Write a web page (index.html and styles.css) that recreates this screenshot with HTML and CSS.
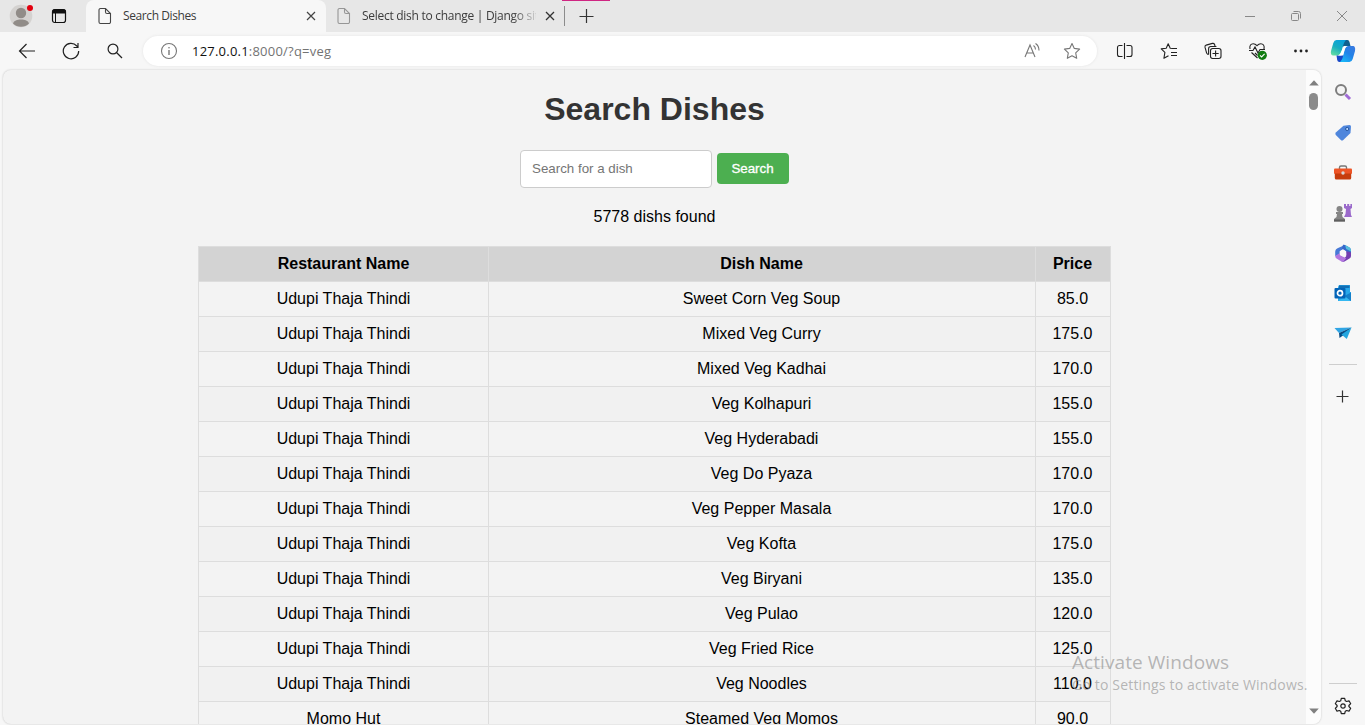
FILE: index.html
```html
<!DOCTYPE html>
<html lang="en">
<head>
<meta charset="utf-8">
<title>Search Dishes</title>
<link rel="stylesheet" href="styles.css">
</head>
<body>
<header class="tabstrip">
  <div class="profile">
    <svg width="24" height="24" viewBox="0 0 24 24"><circle cx="12" cy="12" r="11.3" fill="#d4d2d0"/><circle cx="12" cy="9" r="5.2" fill="#918c88"/><path d="M4 19.500c1-3 4-4 8-4s7 1 8 4a11.300 11.300 0 0 1-16 0z" fill="#918c88"/></svg>
    <span class="alert-dot"></span>
  </div>
  <div class="workspace"><svg width="16" height="16" viewBox="0 0 16 16" fill="none" stroke="#111"><rect x="1.500" y="1.500" width="13" height="13" rx="2.200" stroke-width="1.200"/><path d="M2 2h12v3H2z" fill="#111"/><path d="M4.500 5v9.500"/></svg></div>
  <div class="tab tab-active">
    <svg class="file" width="14" height="18" viewBox="0 0 14 18" fill="none" stroke="#444" stroke-width="1.100"><path d="M2.500 1.500h5l5 5v8.500a1.500 1.500 0 0 1-1.500 1.500H2.500A1.500 1.500 0 0 1 1 15V3a1.500 1.500 0 0 1 1.500-1.500zM7.500 1.500V5a1.500 1.500 0 0 0 1.500 1.500h3.500"/></svg>
    <span class="tab-title title-one">Search Dishes</span>
    <svg class="close" width="10" height="10" viewBox="0 0 10 10" stroke="#444" stroke-width="1.200"><path d="M1 1l8 8M9 1L1 9"/></svg>
  </div>
  <div class="tab tab-idle">
    <svg class="file" width="14" height="18" viewBox="0 0 14 18" fill="none" stroke="#969696" stroke-width="1.100"><path d="M2.500 1.500h5l5 5v8.500a1.500 1.500 0 0 1-1.500 1.500H2.500A1.500 1.500 0 0 1 1 15V3a1.500 1.500 0 0 1 1.500-1.500zM7.500 1.500V5a1.500 1.500 0 0 0 1.500 1.500h3.500"/></svg>
    <span class="tab-title title-two">Select dish to change | Django site</span>
    <svg class="close" width="10" height="10" viewBox="0 0 10 10" stroke="#333" stroke-width="1.300"><path d="M1 1l8 8M9 1L1 9"/></svg>
  </div>
  <div class="new-tab"><svg width="16" height="16" viewBox="0 0 16 16" stroke="#333" stroke-width="1.200"><path d="M8.500 1v14M1.500 8.500h14"/></svg></div>
  <div class="window-controls">
    <span><svg width="12" height="12" viewBox="0 0 12 12" stroke="#888"><path d="M1 6.500h10"/></svg></span>
    <span><svg width="12" height="12" viewBox="0 0 12 12" fill="none" stroke="#888"><rect x="1.500" y="3.500" width="7" height="7" rx="1"/><path d="M3.500 1.500h5a2 2 0 0 1 2 2v5"/></svg></span>
    <span><svg width="12" height="12" viewBox="0 0 12 12" stroke="#888"><path d="M1 1l10 10M11 1L1 11"/></svg></span>
  </div>
</header>

<nav class="toolbar">
  <span class="tool"><svg width="18" height="18" viewBox="0 0 18 18" fill="none" stroke="#222" stroke-width="1.200"><path d="M17 9H1.500M8.500 2L1.500 9l7 7"/></svg></span>
  <span class="tool"><svg width="18" height="18" viewBox="0 0 18 18" fill="none" stroke="#222" stroke-width="1.200"><path d="M16.700 9A7.700 7.700 0 1 1 14.800 4L16 5.500M16 1v4.500h-4.500"/></svg></span>
  <span class="tool"><svg width="18" height="18" viewBox="0 0 18 18" fill="none" stroke="#222" stroke-width="1.200"><circle cx="7" cy="7" r="4.900"/><path d="M10.500 10.500L16 16"/></svg></span>
  <div class="address">
    <svg width="18" height="18" viewBox="0 0 18 18" fill="none" stroke="#777" stroke-width="1.100"><circle cx="9" cy="9" r="7.500"/><path d="M9 8v5" stroke-width="1.400"/><circle cx="9" cy="5.700" r=".8" fill="#777" stroke="none"/></svg>
    <span class="url"><b>127.0.0.1</b>:8000/?q=veg</span>
    <svg class="read" width="18" height="18" viewBox="0 0 18 18" fill="none" stroke="#777" stroke-width="1.100"><path d="M2 15L7 3l5 12M3.700 11h6.600M10.500 3.500q2 1.500 2 4M12.500 1.500q3.500 2.200 3.500 7"/></svg>
    <svg width="18" height="18" viewBox="0 0 18 18" fill="none" stroke="#777" stroke-width="1.100" stroke-linejoin="round"><path d="M9 1.500l2.300 4.900 5.300.7-3.900 3.700 1 5.500L9 13.700l-4.700 2.600 1-5.500-3.900-3.700 5.300-.7z"/></svg>
  </div>
  <span class="tool"><svg width="18" height="18" viewBox="0 0 18 18" fill="none" stroke="#222" stroke-width="1.100"><path d="M6.500 3.500H3.500a2 2 0 0 0-2 2v7a2 2 0 0 0 2 2h3M10.500 3.500h3.500a2 2 0 0 1 2 2v7a2 2 0 0 1-2 2h-3.500M8.500 1v16"/></svg></span>
  <span class="tool"><svg width="18" height="18" viewBox="0 0 18 18" fill="none" stroke="#222" stroke-width="1.100" stroke-linejoin="round"><path d="M12.500 6.500L10.200 6.200 8.200 1.700 6.200 6.200l-5 .7 3.700 3.500-1 5.900L8.500 13.800M11 6.500h6M11 10.500h6M11 13.500h6"/></svg></span>
  <span class="tool"><svg width="18" height="18" viewBox="0 0 18 18" fill="none" stroke="#222" stroke-width="1.100"><rect x="6.500" y="6.500" width="10.500" height="10" rx="2.200"/><path d="M11.600 8.500v6M8.500 11.500h6.200M4.600 12.600L3.700 12.200q-1-.5-1.200-1.500L1 5.200Q.7 3.600 2.200 3.100L8.400 1.400Q10 1.100 10.600 2.500L11 4.200M4.600 12.600V6.700q0-2.200 2.200-2.200h5.600"/></svg></span>
  <span class="tool"><svg width="19" height="18" viewBox="0 0 19 18" fill="none" stroke="#222" stroke-width="1.100"><path d="M2 7C1.200 3.500 3 1.700 5.200 1.700 7 1.700 8 2.600 9 3.700c1-1.100 2-2 3.800-2C15 1.700 16.800 3.500 16 7M1 8.500h4L7 5l3 6 2-3.500h5M3.500 10.500l6 5.500M7 11l2.500 2.500"/><circle cx="14.300" cy="13.300" r="4.600" fill="#107c10" stroke="none"/><path d="M12 13.400l1.600 1.500 3-3" stroke="#fff"/></svg></span>
  <span class="tool"><svg width="18" height="18" viewBox="0 0 18 18" fill="#222"><circle cx="3.500" cy="9" r="1.400"/><circle cx="9" cy="9" r="1.400"/><circle cx="14.500" cy="9" r="1.400"/></svg></span>
  <span class="copilot"><svg width="26" height="24" viewBox="0 0 26 24">
    <defs><linearGradient id="c1" x1="0.700" y1="0" x2="0.200" y2="1"><stop offset="0" stop-color="#08a0dc"/><stop offset=".5" stop-color="#18adc0"/><stop offset="1" stop-color="#62dda1"/></linearGradient><linearGradient id="c2" x1="1" y1="0" x2="0.200" y2="1"><stop offset="0" stop-color="#3d79df"/><stop offset=".5" stop-color="#2182e8"/><stop offset="1" stop-color="#18b9f8"/></linearGradient></defs>
    <path d="M12 1h5.500Q19 1 19.500 3L20.500 7H16l-5 1z" fill="#10608f"/>
    <path d="M6.500 1H16c-2.500 2-3.300 8-4.800 12.500Q10.300 16.500 8 16.500H3.500C1 16.500.5 14.500 1 12L3.300 4Q4.200 1 6.500 1z" fill="url(#c1)"/>
    <path d="M6.500 16.500H14l-2 6.500H9.500Q7.500 23 7.200 21z" fill="#1848c8"/>
    <path d="M18.500 7h4C25 7 25.500 9 25 12l-2.300 8q-1 3-3.200 3H10c3-2 3.300-8 5-13q1-3 3.500-3z" fill="url(#c2)"/>
    <path d="M14 7H17q-2 1-3.100 6-.7 3.500-3.200 3.500H8q2-.5 3-3.500z" fill="#fff"/></svg></span>
</nav>

<div class="workarea">
  <div class="viewport">
    <main class="page">
      <h1>Search Dishes</h1>
      <form class="search"><input type="text" placeholder="Search for a dish"><button type="button">Search</button></form>
      <p class="count">5778 dishs found</p>
      <table>
        <colgroup><col class="col-restaurant"><col class="col-dish"><col class="col-price"></colgroup>
        <thead><tr><th>Restaurant Name</th><th>Dish Name</th><th>Price</th></tr></thead>
        <tbody>
          <tr><td>Udupi Thaja Thindi</td><td>Sweet Corn Veg Soup</td><td>85.0</td></tr>
          <tr><td>Udupi Thaja Thindi</td><td>Mixed Veg Curry</td><td>175.0</td></tr>
          <tr><td>Udupi Thaja Thindi</td><td>Mixed Veg Kadhai</td><td>170.0</td></tr>
          <tr><td>Udupi Thaja Thindi</td><td>Veg Kolhapuri</td><td>155.0</td></tr>
          <tr><td>Udupi Thaja Thindi</td><td>Veg Hyderabadi</td><td>155.0</td></tr>
          <tr><td>Udupi Thaja Thindi</td><td>Veg Do Pyaza</td><td>170.0</td></tr>
          <tr><td>Udupi Thaja Thindi</td><td>Veg Pepper Masala</td><td>170.0</td></tr>
          <tr><td>Udupi Thaja Thindi</td><td>Veg Kofta</td><td>175.0</td></tr>
          <tr><td>Udupi Thaja Thindi</td><td>Veg Biryani</td><td>135.0</td></tr>
          <tr><td>Udupi Thaja Thindi</td><td>Veg Pulao</td><td>120.0</td></tr>
          <tr><td>Udupi Thaja Thindi</td><td>Veg Fried Rice</td><td>125.0</td></tr>
          <tr><td>Udupi Thaja Thindi</td><td>Veg Noodles</td><td>110.0</td></tr>
          <tr><td>Momo Hut</td><td>Steamed Veg Momos</td><td>90.0</td></tr>
        </tbody>
      </table>
    </main>
    <div class="scrollbar">
      <svg width="10" height="6" viewBox="0 0 10 6"><path d="M5 .2L9.800 5.500H.2z" fill="#808080"/></svg>
      <span class="thumb"></span>
      <svg class="down" width="10" height="6" viewBox="0 0 10 6"><path d="M5 5.800L9.800.5H.2z" fill="#808080"/></svg>
    </div>
  </div>
  <aside class="sidebar">
    <span class="app"><svg width="18" height="18" viewBox="0 0 18 18" fill="none"><path d="M11.500 11.500l4.500 4.500" stroke="#a06bd6" stroke-width="3"/><circle cx="7" cy="7" r="5" fill="#f4f4f4" stroke="#7d7d7d" stroke-width="2"/></svg></span>
    <span class="app"><svg width="18" height="18" viewBox="0 0 18 18"><path d="M9.500 1.800L15.500 1q1.500 0 1.500 1.500l-.5 6.500-7.200 7q-1.300 1-2.500 0l-5-5q-1-1.200 0-2.400z" fill="#4f86dc"/><circle cx="13.200" cy="5" r="1.600" fill="#b6d4ff" stroke="#24559f"/></svg></span>
    <span class="app"><svg width="18" height="18" viewBox="0 0 18 18"><path d="M5.500 5V3.500q0-1.500 1.500-1.500h4q1.500 0 1.500 1.500V5" fill="none" stroke="#777" stroke-width="1.400"/><rect x="0" y="4.500" width="18" height="5.500" rx="1" fill="#ee5426"/><path d="M.8 9.500h16.400V14q0 1.500-1.500 1.500H2.300Q.8 15.500.8 14z" fill="#c63c0d"/><circle cx="9" cy="9" r="1.700" fill="#d6d6d6"/></svg></span>
    <span class="app"><svg width="20" height="18" viewBox="0 0 20 18"><path d="M11 0h2v2h1.200V0h2v2h1.200V0H19v4l-1.500 1 .5 6 1 2h-8l1.500-3 .5-5-2-1z" fill="#9b6acb"/><g fill="#858585"><circle cx="6.500" cy="5" r="3"/><path d="M3 8h7v2H9l.5 3 2.500 2v2.500H1V15l2.500-2 .5-3H3z"/></g><path d="M1 15.500h11v2H1z" fill="#5f5f5f"/></svg></span>
    <span class="app"><svg width="18" height="18" viewBox="0 0 18 18"><path d="M11 1.100L4 4Q1.200 5 1.200 8v4L5.800 11V7.300L12.500 3z" fill="#4779d6"/><path d="M9 .8q1-.3 2 .3l4.500 2.500q1.500 1 1.500 3v5L12.200 9V7.300L8 4.800z" fill="#3768ca"/><path d="M11 1l4.500 2.600q1.500 1 1.500 3v1L12.200 5z" fill="#55c0dd"/><path d="M17 8.500V12q0 1.500-1.500 2.500l-5 3Q9 18 7.500 17.200l4.700-5V7.300z" fill="#743eb0"/><path d="M1.200 12l4.600-3v2l6.400 3.200-2.700 3.300q-1 .4-2 0l-5-3Q1.200 13.600 1.200 12z" fill="#b276df"/><path d="M9 5.600l3.200 1.800v3.500L9 12.600l-3.200-1.800V7.300z" fill="#f8f8f8"/></svg></span>
    <span class="app"><svg width="18" height="18" viewBox="0 0 18 18"><path d="M5 1h11v7h1v9H4V3z" fill="#28a8ea"/><path d="M5 1.500h10.500V4H5z" fill="#126fb5"/><path d="M4 17l13-8v6q0 2-2 2z" fill="#35b8f1"/><path d="M10.500 12l6.500 5V8.500z" fill="#1480ca"/><rect x=".5" y="4" width="11" height="10.500" rx="1" fill="#0364b8"/><circle cx="6" cy="9.200" r="2.500" fill="none" stroke="#fff" stroke-width="1.700"/></svg></span>
    <span class="app"><svg width="18" height="18" viewBox="0 0 18 18"><path d="M.5 4l17-.5L5 9z" fill="#30a5e4"/><path d="M17.500 3.500L5 9l.5 5 3.500-2.500z" fill="#074c83"/><path d="M17.500 3.500L12.800 15 7.500 10.500z" fill="#24a6df"/></svg></span>
    <span class="divider"></span>
    <span class="add"><svg width="14" height="14" viewBox="0 0 14 14" stroke="#333" stroke-width="1.200"><path d="M6.500 .5v12M.5 6.500h12"/></svg></span>
    <span class="divider divider-bottom"></span>
    <span class="settings"><svg width="18" height="18" viewBox="0 0 18 18" fill="none" stroke="#222" stroke-width="1.200" stroke-linejoin="round"><path d="M7.300 1.300h3.400l.6 2.500 1.300.7 2.400-.7 1.700 2.900L14.900 8.500v1l1.800 1.800-1.700 2.900-2.400-.7-1.300.7-.6 2.500H7.300l-.6-2.500-1.300-.7-2.400.7-1.700-2.900 1.800-1.800v-1L1.300 6.700 3 3.800l2.400.7 1.300-.7z"/><circle cx="9" cy="9" r="2.200"/></svg></span>
  </aside>
</div>
<div class="watermark"><div class="watermark-title">Activate Windows</div><div class="watermark-text">Go to Settings to activate Windows.</div></div>
</body>
</html>
```
FILE: styles.css
```css
* { box-sizing: border-box; }
body { margin: 0; width: 1365px; height: 725px; overflow: hidden; display: flex; flex-direction: column; background: #f7f7f7; font-family: "Open Sans", sans-serif; }
svg { display: block; flex: none; }
.tabstrip { height: 32px; flex: none; display: flex; background: #e7e7e7; }
.profile { position: relative; width: 42px; padding: 4px 0 0 9px; }
.alert-dot { position: absolute; left: 27px; top: 5px; width: 6px; height: 6px; border-radius: 50%; background: #e3000f; }
.workspace { width: 44px; padding: 8px 0 0 9px; }
.tab { display: flex; align-items: center; height: 32px; }
.tab-active { width: 240px; padding-left: 12px; background: #f7f7f7; border-radius: 8px 8px 0 0; }
.tab-idle { width: 238px; padding-left: 11px; }
.tab-title { font-size: 12px; line-height: 18px; color: #3b3b3b; white-space: nowrap; overflow: hidden; }
.title-one { width: 174px; margin: 0 9px 0 11px; letter-spacing: -.4px; }
.title-two { width: 174px; margin: 0 9px 0 11px; letter-spacing: -.28px; -webkit-mask-image: linear-gradient(90deg, #000 150px, transparent 178px); mask-image: linear-gradient(90deg, #000 150px, transparent 178px); }
.new-tab { height: 26px; width: 48px; padding: 7px 0 0 16px; border-top: 1px solid #cf2582; position: relative; margin-left: -2px; }
.new-tab::before { content: ""; position: absolute; left: 2px; top: 5px; width: 1px; height: 20px; background: #8c8c8c; }
.window-controls { margin-left: auto; display: flex; }
.window-controls span { width: 46px; height: 32px; display: grid; place-items: center; }
.toolbar { height: 38px; flex: none; display: flex; align-items: center; padding-left: 5px; }
.tool { width: 44px; display: flex; justify-content: center; }
.address { width: 954px; height: 30px; margin: 0 6px; padding: 0 16px 0 17px; display: flex; align-items: center; background: #fff; border-radius: 15px; box-shadow: 0 0 3px #e3e3e3; }
.url { margin-left: 14px; font-size: 13px; letter-spacing: .22px; color: #737373; }
.url b { color: #111; font-weight: 400; }
.read { margin-left: auto; margin-right: 22px; }
.copilot { width: 40px; display: flex; justify-content: center; }
.workarea { flex: 1; min-height: 0; display: flex; padding: 0 0 1px 3px; }
.viewport { width: 1318px; height: 654px; display: flex; overflow: hidden; border-radius: 8px; background: #f3f3f3; box-shadow: 0 0 2px #bdbdbd; }
.page { width: 1303px; height: 654px; overflow: hidden; display: flex; flex-direction: column; align-items: center; font-family: "Liberation Sans", Arial, sans-serif; color: #000; }
h1 { margin: 21px 0 22px; font-size: 32px; line-height: 37px; color: #333; }
.search { display: flex; align-items: flex-start; gap: 5px; height: 38px; }
.search input { width: 192px; height: 38px; padding: 0 11px 2px; border: 1px solid #ccc; border-radius: 4px; background: #fff; font: 13.333px "Liberation Sans", Arial, sans-serif; }
.search input::placeholder { color: #757575; opacity: 1; }
.search button { width: 72px; height: 31px; margin-top: 3px; padding: 0 1px 0 0; border: 0; border-radius: 4px; background: #4caf50; color: #fff; font: 13.333px "Liberation Sans", Arial, sans-serif; -webkit-text-stroke: .3px #fff; }
.count { margin: 19px 0 20px; font-size: 16px; line-height: 19px; }
table { width: 913px; table-layout: fixed; border-collapse: collapse; flex: none; font-size: 16px; line-height: 18px; text-align: center; }
.col-restaurant { width: 290px; }
.col-dish { width: 547px; }
.col-price { width: 75px; }
th, td { height: 35px; padding: 8px; border: 1px solid #ddd; }
th + th, td + td { padding-right: 9px; }
th { background: #d3d3d3; }
tbody tr:nth-child(even) { background: #f1f1f1; }
.scrollbar { width: 15px; display: flex; flex-direction: column; align-items: center; padding: 10px 0; background: #fcfcfc; }
.thumb { width: 9px; height: 17px; margin-top: 7px; border-radius: 5px; background: #8b8b8b; }
.down { margin-top: auto; }
.sidebar { width: 44px; display: flex; flex-direction: column; align-items: center; padding-top: 2px; }
.app { width: 40px; height: 40px; display: grid; place-items: center; }
.app + .app svg { margin-top: 1px; }
.divider { width: 28px; height: 1px; margin-top: 12px; background: #cecece; }
.add { margin-top: 25px; }
.divider-bottom { margin-top: auto; }
.settings { margin: 13px 0 9px; }
.watermark { position: absolute; left: 1072px; top: 649px; color: rgba(145, 145, 145, .65); white-space: nowrap; }
.watermark-title { font-size: 19px; line-height: 26px; letter-spacing: .07px; }
.watermark-text { font-size: 14px; line-height: 20px; letter-spacing: .18px; }
```
